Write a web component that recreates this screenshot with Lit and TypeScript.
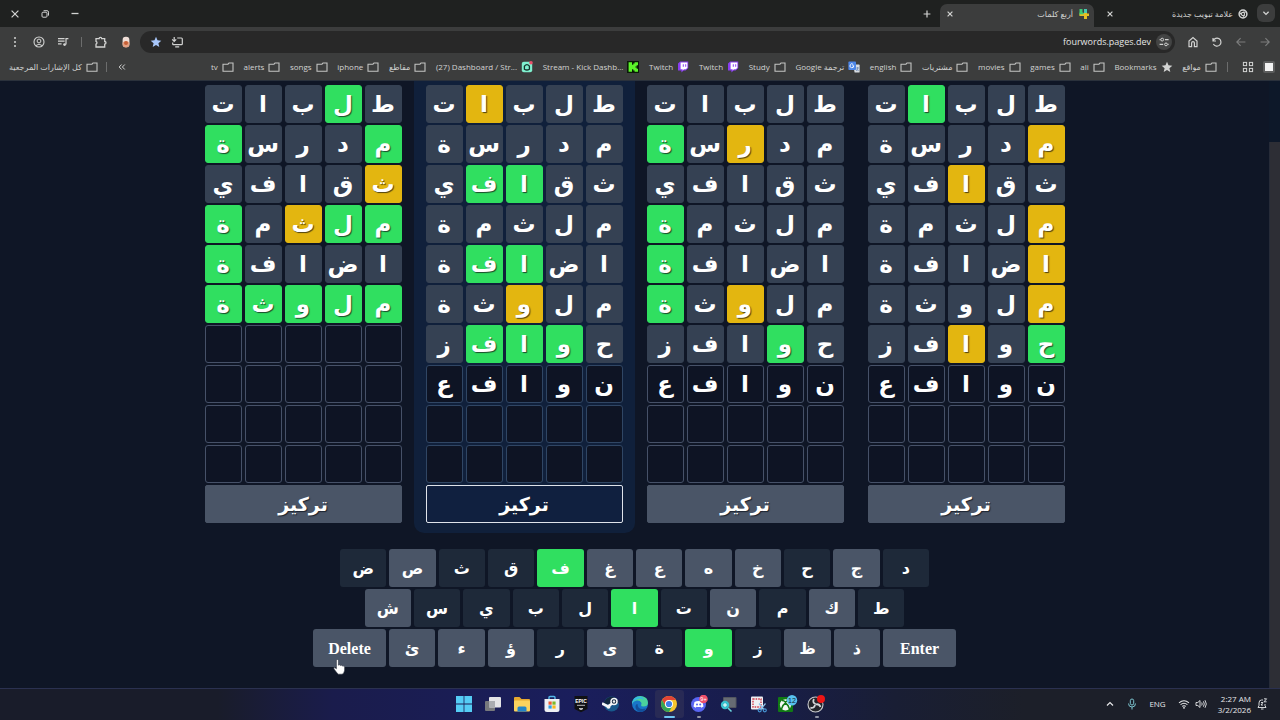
import { LitElement, html, svg, css, nothing, TemplateResult } from "lit";
import { customElement, property } from "lit/decorators.js";
import { classMap } from "lit/directives/class-map.js";

const icon = (size: number, box: string, body: TemplateResult) =>
  html`<svg width=${size} height=${size} viewBox=${box} aria-hidden="true" fill="none" stroke="currentColor">${body}</svg>`;

const folder = html`<svg width="12" height="12" viewBox="0 0 12 12" aria-hidden="true" fill="none" stroke="#c4c5c4" stroke-width="1.1">
  <path d="M1 3.2H6l1-1.2h4v8.2H1z" /></svg>`;

const glyphs = {
  close: icon(10, "0 0 10 10", svg`<path d="M1.6 1.6l6.8 6.8M8.4 1.6L1.6 8.4" stroke-width="1.2"/>`),
  tabClose: icon(8, "0 0 8 8", svg`<path d="M1.6 1.6l4.8 4.8M6.4 1.6L1.6 6.4" stroke-width="1.2"/>`),
  restore: icon(10, "0 0 10 10", svg`<rect x="2" y="3.2" width="5" height="5" rx="1"/><path d="M3.6 1.7H7q1.5 0 1.5 1.5v3.4"/>`),
  minimize: icon(10, "0 0 10 10", svg`<path d="M1.5 4.5h7" stroke-width="1.3"/>`),
  plus: icon(10, "0 0 10 10", svg`<path d="M5 1.6v6.8M1.6 5h6.8" stroke-width="1.2"/>`),
  chevron: icon(10, "0 0 10 10", svg`<path d="M2.4 3.8L5 6.4l2.6-2.6" stroke-width="1.3"/>`),
  chromeMono: icon(10, "0 0 10 10", svg`<circle cx="5" cy="5" r="3.9" stroke-width="1.5"/><circle cx="5" cy="5" r="1.6" stroke-width="1.1"/><path d="M5 3.1h3.6M3.4 6L1.6 3M6.6 6L4.9 9" stroke-width="1"/>`),
  four: icon(12, "0 0 12 12", svg`<g stroke="none"><path d="M1.500 1h3v4h2.500v2.500H1.500z" fill="#3ecb74"/><path d="M1.500 5.500H11V8H1.500z" fill="#e5be24"/><path d="M1.500 4.500h4v1.800h-4z" fill="#3ecb74"/><path d="M6 1h3v4.500H6z" fill="#46c7b0"/><path d="M6 5h3v6H6z" fill="#e5be24"/></g>`),
  dots: icon(12, "0 0 12 12", svg`<g fill="currentColor" stroke="none"><circle cx="6" cy="2" r="1"/><circle cx="6" cy="6" r="1"/><circle cx="6" cy="10" r="1"/></g>`),
  person: icon(12, "0 0 12 12", svg`<circle cx="6" cy="6" r="5" stroke-width="1.1"/><circle cx="6" cy="5" r="1.9"/><path d="M2.8 9.6q3.2-2.8 6.4 0"/>`),
  media: icon(12, "0 0 12 12", svg`<path d="M1 2.6h6.6M1 5.2h6.6M1 7.8h3.6M9 8.4V2.6h2.4" stroke-width="1.2"/><circle cx="7.6" cy="8.6" r="1.4" fill="currentColor" stroke="none"/>`),
  puzzle: icon(14, "0 0 14 14", svg`<path d="M2 3.6h3.1a1.3 1.3 0 0 1 2.6 0h3v2.9a1.3 1.3 0 0 1 0 2.6v2.9H2V9.2a1.5 1.5 0 0 0 0-2.8z" stroke-width="1.3"/>`),
  extension: icon(12, "0 0 12 12", svg`<g stroke="none"><rect x="2.6" y=".8" width="6.8" height="10.4" rx="3.2" fill="#f0dfd8"/><path d="M2.6 6.4q3.4-2.4 6.8 0v1.8a3.2 3 0 0 1-6.8 0z" fill="#e3a184"/><circle cx="6" cy="7" r="2" fill="#c65f36"/></g>`),
  star: icon(12, "0 0 12 12", svg`<path d="M6 .8l1.5 3.5 3.8.4-2.9 2.5.9 3.8L6 9 2.7 11l.9-3.8L.7 4.7l3.8-.4z" fill="currentColor" stroke="none"/>`),
  install: icon(12, "0 0 12 12", svg`<path d="M6.2 2h4.2q.9 0 .9.9v4.9q0 .9-.9.9H2.6q-.9 0-.9-.9V6.600M4.200 10.800h4M3.200 1v4M1.200 3.400l2 2 2-2" stroke-width="1.2"/>`),
  tune: icon(12, "0 0 12 12", svg`<path d="M1.6 3.6h1M7 3.6h3.6M1.6 8.4h3.6M9.8 8.4h.8" stroke-width="1.2"/><circle cx="4.2" cy="3.6" r="1.4"/><circle cx="8" cy="8.4" r="1.4"/>`),
  home: icon(12, "0 0 12 12", svg`<path d="M2 5l4-3.4L10 5v5.6H7.4V7a1.4 1.4 0 0 0-2.8 0v3.6H2z" stroke-width="1.2"/>`),
  reload: icon(12, "0 0 12 12", svg`<path d="M2 2v3h3M2.2 4.8A4 4 0 1 1 2.4 8" stroke-width="1.2"/>`),
  left: icon(12, "0 0 12 12", svg`<path d="M10.4 6H2M5.6 2.2L1.8 6l3.8 3.8" stroke-width="1.1"/>`),
  right: icon(12, "0 0 12 12", svg`<path d="M1.6 6H10M6.4 2.2L10.2 6 6.4 9.8" stroke-width="1.1"/>`),
  more: icon(10, "0 0 10 10", svg`<path d="M4.6 2.500L2.200 5l2.400 2.500M7.800 2.500L5.400 5l2.400 2.500" stroke-width="1"/>`),
  dash: icon(12, "0 0 12 12", svg`<rect x=".8" y=".8" width="10.4" height="10.4" rx="2" fill="#7ff0cf" stroke="none"/><path d="M3.4 5.2q2.6-3 5 0v3q-2.4 1.6-5 0z" stroke="#15332c" stroke-width="1.3"/><circle cx="10" cy="1.8" r="1.8" fill="#e8506a" stroke="none"/>`),
  kick: icon(12, "0 0 12 12", svg`<g stroke="none"><rect width="12" height="12" fill="#0b1a08"/><path d="M1.6 1.2H5v2.6h1.3V2.5h1.3V1.2H11v3H9.700v1.300H8.400v1h1.300v1.300H11v3H7.600V9.500H6.300V8.200H5v2.600H1.600z" fill="#5cf52a"/></g>`),
  twitch: icon(12, "0 0 12 12", svg`<g stroke="none"><path d="M1 2.600L3.200.6h8v6.600L8.600 9.600H6.600L4.400 11.600V9.600H1z" fill="#8a3df0"/><path d="M3.600 1.400h6.800v5.400L8.800 8.200H7L5.600 9.600V8.200h-2z" fill="#fff"/><path d="M5.800 3.200h1v2.600h-1zM8.200 3.200h1v2.600h-1z" fill="#8a3df0"/></g>`),
  translate: icon(12, "0 0 12 12", svg`<g stroke="none"><path d="M5 3.600h6q.6 0 .6.600v6.800q0 .6-.6.600H6.600z" fill="#d7dce2"/><rect x=".4" y=".6" width="7.600" height="8.400" rx=".8" fill="#4c86e8"/></g><path d="M5.800 4.800H4.400M5.800 4.800A1.900 1.900 0 1 1 5.200 3.400" stroke="#fff" stroke-width=".9"/><path d="M8.200 7h2.800M9.600 6v1q0 2-1.400 3M8.800 8.200l1.800 1.800" stroke="#5e7fb0" stroke-width=".7"/>`),
  apps: icon(12, "0 0 12 12", svg`<rect x="1.400" y="1.400" width="3.200" height="3.200"/><rect x="7.400" y="1.400" width="3.200" height="3.200"/><rect x="1.400" y="7.400" width="3.200" height="3.200"/><rect x="7.400" y="7.400" width="3.200" height="3.200"/>`),
  panel: icon(12, "0 0 12 12", svg`<rect width="12" height="12" rx="2" fill="#5c5d5d" stroke="none"/><rect x="2" y="2" width="8" height="8" fill="#f2f2f2" stroke="none"/>`),
};

const bookmarks: { label: string; mark: TemplateResult; ar?: boolean }[] = [
  { label: "tv", mark: folder },
  { label: "alerts", mark: folder },
  { label: "songs", mark: folder },
  { label: "iphone", mark: folder },
  { label: "مقاطع", mark: folder, ar: true },
  { label: "(27) Dashboard / Str...", mark: glyphs.dash },
  { label: "Stream - Kick Dashb...", mark: glyphs.kick },
  { label: "Twitch", mark: glyphs.twitch },
  { label: "Twitch", mark: glyphs.twitch },
  { label: "Study", mark: folder },
  { label: "ترجمة Google", mark: glyphs.translate, ar: true },
  { label: "english", mark: folder },
  { label: "مشتريات", mark: folder, ar: true },
  { label: "movies", mark: folder },
  { label: "games", mark: folder },
  { label: "ali", mark: folder },
  { label: "Bookmarks", mark: glyphs.star },
  { label: "مواقع", mark: folder, ar: true },
];

@customElement("browser-chrome")
export class BrowserChrome extends LitElement {
  static styles = css`
    :host { display: block; color: #d2d3d2; font-family: "Open Sans", "DejaVu Sans", sans-serif; font-size: 8px; line-height: 12px; }
    svg { display: block; flex: none; }
    button { display: grid; place-items: center; padding: 0; border: 0; background: none; color: inherit; font: inherit; }
    .strip { display: flex; align-items: stretch; height: 27px; padding-right: 5px; background: #1f2120; }
    .window { display: flex; align-items: center; gap: 20px; padding-left: 10px; }
    .fill { flex: 1; }
    .new { width: 26px; }
    .tab { display: flex; align-items: center; gap: 5px; width: 159px; padding: 0 5px 0 12px; margin-top: 4px; box-sizing: border-box; }
    .tab.on { width: 154px; padding: 0 4px 0 6px; background: #3c3d3d; border-radius: 7px 7px 0 0; }
    .tab svg { margin-bottom: 3px; }
    .title { flex: 1; direction: rtl; text-align: start; margin-bottom: 3px; }
    .list { width: 18px; height: 18px; margin: 4px 0 0 4px; border-radius: 6px; background: #3c3d3d; }
    .bar { display: flex; align-items: center; height: 27px; padding: 3px 9px 0 9px; box-sizing: border-box; background: #3c3d3d; }
    .tools { display: flex; align-items: center; gap: 12px; padding-right: 8px; }
    .rule { width: 1px; height: 10px; background: #6c6d6d; }
    .box { flex: 1; display: flex; align-items: center; height: 22px; padding: 0 3px 0 10px; gap: 9px; border-radius: 11px; background: #282828; }
    .box input { flex: 1; min-width: 0; padding: 0; border: 0; outline: 0; background: none; color: #e6e6e6; text-align: right; font: 9px/12px "Open Sans", sans-serif; }
    .saved { color: #a8c7fa; }
    .chip { width: 16px; height: 16px; border-radius: 8px; background: #434444; margin-left: -4px; }
    .nav { display: flex; gap: 12px; padding-left: 12px; }
    .dim { color: #7c7d7d; }
    .marks { display: flex; align-items: center; height: 27px; padding: 0 5px 1px 9px; box-sizing: border-box; background: #3c3d3d; border-bottom: 1px solid #2a313c; }
    .mark { display: flex; align-items: center; gap: 4px; color: inherit; text-decoration: none; white-space: nowrap; }
    .ar { direction: rtl; }
    .all { width: 87px; justify-content: space-between; }
    .marks .rule { margin: 0 10px; }
    .row { flex: 1; display: flex; justify-content: space-between; padding-left: 84px; }
    .tail { display: flex; gap: 9px; margin-left: 4px; }
  `;

  render() {
    return html`
      <div class="strip">
        <div class="window">
          <button aria-label="إغلاق">${glyphs.close}</button>
          <button aria-label="استعادة">${glyphs.restore}</button>
          <button aria-label="تصغير">${glyphs.minimize}</button>
        </div>
        <div class="fill"></div>
        <button class="new" aria-label="علامة تبويب جديدة">${glyphs.plus}</button>
        <div class="tab on">
          <button aria-label="إغلاق علامة التبويب">${glyphs.tabClose}</button>
          <span class="title">أربع كلمات</span>${glyphs.four}
        </div>
        <div class="tab">
          <button aria-label="إغلاق علامة التبويب">${glyphs.tabClose}</button>
          <span class="title">علامة تبويب جديدة</span>${glyphs.chromeMono}
        </div>
        <button class="list" aria-label="علامات التبويب">${glyphs.chevron}</button>
      </div>
      <div class="bar">
        <div class="tools">
          <button aria-label="القائمة">${glyphs.dots}</button>
          <button aria-label="الملف الشخصي">${glyphs.person}</button>
          <button aria-label="الوسائط">${glyphs.media}</button>
          <span class="rule"></span>
          <button aria-label="الإضافات">${glyphs.puzzle}</button>
          <button aria-label="إضافة">${glyphs.extension}</button>
        </div>
        <div class="box">
          <button class="saved" aria-label="إشارة مرجعية">${glyphs.star}</button>
          <button aria-label="تثبيت">${glyphs.install}</button>
          <input aria-label="العنوان" value="fourwords.pages.dev" />
          <button class="chip" aria-label="معلومات الموقع">${glyphs.tune}</button>
        </div>
        <div class="nav">
          <button aria-label="الصفحة الرئيسية">${glyphs.home}</button>
          <button aria-label="إعادة تحميل">${glyphs.reload}</button>
          <button class="dim" aria-label="الأمام">${glyphs.left}</button>
          <button class="dim" aria-label="الخلف">${glyphs.right}</button>
        </div>
      </div>
      <div class="marks">
        <a class="mark all" href="#"><span class="ar">كل الإشارات المرجعية</span>${folder}</a>
        <span class="rule"></span>
        <button aria-label="المزيد">${glyphs.more}</button>
        <div class="row">
          ${bookmarks.map((b) => html`<a class="mark" href="#"><span class=${b.ar ? "ar" : "en"}>${b.label}</span>${b.mark}</a>`)}
        </div>
        <span class="rule"></span>
        <div class="tail">
          <button aria-label="التطبيقات">${glyphs.apps}</button>
          <button aria-label="اللوحة">${glyphs.panel}</button>
        </div>
      </div>`;
  }
}

type Board = { active?: boolean; marks: string[]; typing: boolean };
const guesses = ["طلبات", "مدرسة", "ثقافي", "ملثمة", "اضافة", "ملوثة", "حوافز"];
const current = "نوافع";
const ROWS = 10;

/* g: right place, y: wrong place, -: absent */
const boards: Board[] = [
  { typing: false, marks: ["-g---", "g---g", "y----", "ggy-g", "----g", "ggggg"] },
  { typing: true, active: true, marks: ["---y-", "-----", "--gg-", "-----", "--gg-", "--y--", "-ggg-"] },
  { typing: true, marks: ["-----", "--y-g", "-----", "----g", "----g", "--y-g", "-g---"] },
  { typing: true, marks: ["---g-", "y----", "--y--", "y----", "y----", "y----", "g-y--"] },
];

@customElement("word-board")
export class WordBoard extends LitElement {
  @property({ attribute: false }) board!: Board;

  static styles = css`
    :host { display: block; font-family: "DejaVu Sans", sans-serif; }
    .board { display: flex; flex-direction: column; gap: 2px; padding: 4px 12px 10px; border-radius: 0 0 10px 10px; direction: rtl; }
    .board.active { background: #10203b; }
    .line { display: grid; grid-template-columns: repeat(5, 37px); gap: 3px; }
    .tile { height: 38px; box-sizing: border-box; border-radius: 3px; color: #fff; font-weight: 700; font-size: 23px; line-height: 36px; text-align: center; background: #0e1424; border: 1px solid #465168; }
    .active .tile { border-color: #304664; }
    .tile.absent, .active .tile.absent { background: #354153; border-color: #354153; }
    .tile.g, .active .tile.g { background: #30df60; border-color: #30df60; text-shadow: 1px 1px 1px #1b4a2c; }
    .tile.y, .active .tile.y { background: #e3b610; border-color: #e3b610; text-shadow: 1px 1px 1px #4f4210; }
    .focus { height: 38px; padding: 0; border: 1px solid #4a5567; border-radius: 2px; background: #4a5567; color: #fff; font: 700 19px/32px "DejaVu Sans", sans-serif; text-shadow: 1px 1px 1px #1c2430; }
    .active .focus { background: #10203f; border-color: #dfe3ea; }
  `;

  private tile(letter: string, mark: string) {
    return html`<span class=${classMap({ tile: true, g: mark === "g", y: mark === "y", absent: mark === "-" })}>${letter || nothing}</span>`;
  }

  render() {
    const { marks, typing, active } = this.board;
    const lines = Array.from({ length: ROWS }, (_, r) => {
      const word = r < marks.length ? guesses[r] : typing && r === marks.length ? current : "";
      return html`<div class="line">${[0, 1, 2, 3, 4].map((c) => this.tile(word[c] ?? "", marks[r]?.[c] ?? ""))}</div>`;
    });
    return html`<section class=${classMap({ board: true, active: !!active })}>
      ${lines}<button class="focus">تركيز</button>
    </section>`;
  }
}

/* g: found, d: ruled out, u: unused */
const keyRows: [string, string, string][] = [
  ["top", "ضصثقفغعهخحجد", "duddguuuudud"],
  ["middle", "شسيبلاتنمكط", "uddddgdudud"],
  ["bottom", "ئءؤرىةوزظذ", "uuududgduu"],
];

@customElement("letter-keyboard")
export class LetterKeyboard extends LitElement {
  static styles = css`
    :host { display: flex; flex-direction: column; align-items: center; gap: 2px; }
    .keys { display: flex; gap: 3px; max-width: 100%; }
    .top { width: 589px; }
    .middle { width: 540px; }
    .bottom { width: 643px; }
    .key { flex: 1 1 0; min-width: 0; height: 38px; padding: 1px 0 0; border: 0; border-radius: 3px; color: #fff; font: 700 16px/24px "DejaVu Sans", sans-serif; }
    .u { background: #4a5567; }
    .d { background: #1e2939; }
    .g { background: #30df60; }
    .wide { position: relative; flex: 0 0 73px; font-family: "Liberation Serif", serif; }
    .hand { position: absolute; left: 20px; top: 30px; }
  `;

  render() {
    return html`${keyRows.map(([name, letters, states]) => html`<div class="keys ${name}">
      ${name === "bottom"
        ? html`<button class="key wide u">Delete
            <svg class="hand" width="13" height="16" viewBox="0 0 13 16" aria-hidden="true">
              <path d="M3.400 1.600q0-1.200 1-1.200t1 1.200v4.600q1.300-.9 2 .3 1.300-.8 2 .4 2-.6 2.200 1.300v3q-.2 2.800-2.400 4H5.200Q3.600 13.600 1 10q-.8-1.600.8-1.400l1.600 1.200z" fill="#fff" stroke="#2b3340" stroke-width=".6"/>
            </svg></button>`
        : nothing}
      ${[...letters].map((l, i) => html`<button class="key ${states[i]}">${l}</button>`)}
      ${name === "bottom" ? html`<button class="key wide u">Enter</button>` : nothing}
    </div>`)}`;
  }
}

const app = (body: TemplateResult) =>
  html`<svg width="18" height="18" viewBox="0 0 18 18" aria-hidden="true" fill="none">${body}</svg>`;

const apps: { name: string; art: TemplateResult; state?: "on" | "open" }[] = [
  { name: "Start", art: app(svg`<path d="M1 1h7.600v7.600H1zM9.400 1H17v7.600H9.400zM1 9.400h7.600V17H1zM9.400 9.400H17V17H9.400z" fill="#55cdf5"/>`) },
  { name: "Task view", art: app(svg`<rect x="1" y="6" width="10" height="10" rx="1" fill="#77797d"/><rect x="5" y="2" width="12" height="10.500" rx="1" fill="#e4e4e6"/><path d="M5 6h6v6.500H5z" fill="#aaacb0"/>`) },
  { name: "Files", art: app(svg`<path d="M1 3q0-1 1-1h4.500l2 2H16q1 0 1 1v3H1z" fill="#e6a92f"/><rect x="1" y="5.500" width="16" height="11" rx="1" fill="#fbd35e"/><path d="M4.500 16.500V13q0-1.500 1.500-1.500h6q1.500 0 1.500 1.500v3.500z" fill="#2485c8"/>`) },
  { name: "Store", art: app(svg`<path d="M6 4V2.500Q6 1.500 7 1.500h4q1 0 1 1V4" stroke="#54b9ea" stroke-width="1.400"/><path d="M1.500 4h15v10.500q0 2.500-2.500 2.500H4q-2.500 0-2.500-2.500z" fill="#eef0f3"/><path d="M5.500 6.500h3.200v3.200H5.500z" fill="#ef5a32"/><path d="M9.400 6.500h3.200v3.200H9.400z" fill="#7db928"/><path d="M5.500 10.400h3.200v3.200H5.500z" fill="#2b9fe3"/><path d="M9.400 10.400h3.200v3.200H9.400z" fill="#f9b91e"/>`) },
  { name: "Epic Games", art: app(svg`<path d="M2.500 1h13v13L9 17.200 2.500 14z" fill="#101114"/><text x="9" y="8" text-anchor="middle" font-family="Liberation Sans" font-weight="700" font-size="5" fill="#fff">EPIC</text><path d="M5 10.300h8M7 13.500h4L9 14.800z" stroke="#c9cacc" stroke-width=".9"/>`) },
  { name: "Steam", art: app(svg`<circle cx="9.500" cy="9" r="7.600" fill="#17588c"/><path d="M1.900 8.500A7.600 7.600 0 0 1 17 8.500q-4-2-8 2z" fill="#12283f"/><path d="M0 8.500l6 3 5.500-4" stroke="#f4f6f8" stroke-width="2.600"/><circle cx="12" cy="6.500" r="3" fill="#12283f" stroke="#f4f6f8" stroke-width="1.500"/><circle cx="12" cy="6.500" r="1.200" fill="#f4f6f8"/><circle cx="6.500" cy="11.800" r="2" fill="#f4f6f8"/>`) },
  { name: "Edge", art: app(svg`<circle cx="9" cy="9" r="8" fill="#1976c9"/><path d="M1 9Q2 1 9.500 1 17 1.500 17 8q-.4 3.500-4.500 3.500-2.500 0-2.500-1.500 1-1 .2-2.500Q8.700 5 5.500 5.600 2 6.400 1 9z" fill="#4bd19d"/><path d="M1 9Q1.500 3.500 6 2q6-1.500 7 3Q9 2.500 5.500 4.500 2 6 1 9z" fill="#35b8e6"/><path d="M6.500 9q0 6.500 8.500 4.500Q12.500 17 9 17 4 15.500 4.500 11q.4-2 2-2z" fill="#124f9c"/>`) },
  { name: "Chrome", state: "on", art: app(svg`<circle cx="9" cy="9" r="8" fill="#f7c52d"/><path d="M2.100 5A8 8 0 0 1 15.900 5H9a4 4 0 0 0-3.500 6z" fill="#e24335"/><path d="M2.100 5A8 8 0 0 0 9 17l3.500-6a4 4 0 0 1-7 0z" fill="#33a557"/><circle cx="9" cy="9" r="4" fill="#fff"/><circle cx="9" cy="9" r="3.100" fill="#3f7fe8"/>`) },
  { name: "Discord", state: "open", art: app(svg`<circle cx="8.500" cy="9.500" r="7.500" fill="#5865f2"/><path d="M4.500 7Q8.500 5 12.500 7l1 4.500-2.200 1.200-.8-1q-2 .6-4 0l-.8 1-2.200-1.200z" fill="#fff"/><circle cx="7" cy="9.500" r="1" fill="#5865f2"/><circle cx="10.200" cy="9.500" r="1" fill="#5865f2"/><circle cx="13.500" cy="4" r="4.300" fill="#f0506b"/><text x="13.500" y="6" text-anchor="middle" font-family="Liberation Sans" font-size="5.500" fill="#fff">9+</text>`) },
  { name: "Magnifier", art: app(svg`<rect x="4" y="2" width="13.500" height="11" rx="1" fill="#52565f"/><rect x="5" y="3" width="11.500" height="9" fill="#666b73"/><circle cx="6" cy="10" r="4.200" fill="#38c0cf"/><path d="M9 13l3.500 3.500" stroke="#6cd3dc" stroke-width="1.600"/><path d="M6 8v4M4 10h4" stroke="#fff"/>`) },
  { name: "Snipping Tool", art: app(svg`<rect x="2" y="1.500" width="12" height="13" rx="1" fill="#eef0f4"/><rect x="4" y="4" width="8" height="8" stroke="#d23d4c" stroke-width="1.400" stroke-dasharray="1.600 1"/><path d="M10 8.500l5 6M16.500 8.500l-5 6" stroke="#8fc2e8" stroke-width="1.200"/><circle cx="10.700" cy="15.300" r="1.500" stroke="#4795d4" stroke-width="1.200"/><circle cx="15.800" cy="15.300" r="1.500" stroke="#4795d4" stroke-width="1.200"/>`) },
  { name: "Xbox", art: html`<svg width="22" height="18" viewBox="-1 0 22 18" aria-hidden="true" fill="none"><rect x="1" y="2" width="15" height="15" rx="1" fill="#117a14"/><circle cx="8.500" cy="9.800" r="5.600" fill="#f3f8f3"/><path d="M4.500 14Q6 9.500 8.500 8q2.500 1.500 4 6M5 5.500Q7 5.500 8.500 7q1.500-1.500 3.500-1.500" stroke="#117a14" stroke-width="1.500"/><circle cx="15" cy="5.200" r="5.200" fill="#58c2ef"/><text x="15" y="7.700" text-anchor="middle" font-family="Liberation Sans" font-size="7" fill="#10222d">12</text></svg>` },
  { name: "OBS", state: "open", art: app(svg`<circle cx="8.500" cy="9.500" r="7.500" fill="#23242a" stroke="#c9cacd" stroke-width="1.100"/><path d="M8.500 9Q5 7.500 7 4M8.500 9.500q3.800-1 5 2.500M8 10q-1 3.800-4.600 2.600" stroke="#d4d5d8" stroke-width="1.800"/><circle cx="14" cy="4" r="4" fill="#ee1515"/>`) },
];

@customElement("task-bar")
export class TaskBar extends LitElement {
  static styles = css`
    :host { display: grid; grid-template-columns: 1fr 382px 1fr; height: 32px; padding-bottom: 2px; box-sizing: border-box; border-top: 1px solid #2b3150;
      background: linear-gradient(90deg, #191c2a 0, #191c2a 17%, #1a1c4c 26%, #1a1e5c 45%, #181d4c 58%, #191e34 70%, #1c1f29 80%); color: #e7e8ea; font: 8px/11px "Open Sans", sans-serif; }
    svg { display: block; }
    button { padding: 0; border: 0; background: none; color: inherit; font: inherit; }
    .apps { grid-column: 2; display: flex; align-items: center; }
    .app { position: relative; flex: 1 1 0; height: 28px; display: grid; place-items: center; border-radius: 3px; }
    .app.on { background: #282a55; }
    .dash { position: absolute; bottom: 0; left: 13px; width: 4px; height: 2px; border-radius: 1px; background: #9296a6; }
    .on .dash { left: 9px; width: 11px; background: #6fc6f3; }
    .tray { display: flex; justify-content: flex-end; align-items: center; gap: 5px; padding-right: 12px; }
    .tray > * { display: block; }
    .lang { margin: 0 7px 0 6px; }
    .caret { margin-right: 6px; }
    .clock { text-align: right; margin-left: 6px; }
    .clock span { display: block; }
  `;

  render() {
    return html`
      <div class="apps">
        ${apps.map((a) => html`<button class="app ${a.state ?? ""}" aria-label=${a.name}>${a.art}${a.state ? html`<span class="dash"></span>` : nothing}</button>`)}
      </div>
      <div class="tray">
        <button class="caret" aria-label="Hidden icons">${icon(10, "0 0 10 10", svg`<path d="M2 6.500l3-3 3 3" stroke-width="1.200"/>`)}</button>
        <svg width="12" height="12" viewBox="0 0 12 12" aria-hidden="true" fill="none" stroke="#7cc4cf"><rect x="4.300" y="1" width="3.400" height="6" rx="1.700"/><path d="M2.500 5.500q0 3.500 3.500 3.500t3.500-3.500M6 9v2.500"/></svg>
        <span class="lang">ENG</span>
        ${icon(12, "0 0 12 12", svg`<path d="M1 4.800q5-4.200 10 0M2.600 6.600q3.400-2.800 6.800 0M4.200 8.400q1.800-1.400 3.600 0" stroke-width="1.100"/><circle cx="6" cy="9.800" r=".9" fill="currentColor" stroke="none"/>`)}
        ${icon(12, "0 0 12 12", svg`<path d="M1 4.500h1.800L5 2.500v7L2.800 7.500H1zM6.700 4.500q1 1.500 0 3M8.400 3.300q1.800 2.700 0 5.400M10 2.200q2.600 3.800 0 7.600" stroke-width=".9"/>`)}
        <button class="clock"><span>2:27 AM</span><span>3/2/2026</span></button>
        ${icon(12, "0 0 12 12", svg`<path d="M7 2H5.500Q3 2 3 5v2.500L2 9.500h8L9 7.500V6M5 11h2.500M8 .8h2.600L8 3.800h2.600M5 4.500h2L5 7h2" stroke-width=".9"/>`)}
      </div>`;
  }
}

@customElement("app-root")
export class AppRoot extends LitElement {
  static styles = css`
    :host { display: flex; flex-direction: column; height: 100vh; overflow: hidden; background: #0f1626; }
    .view { flex: 1; min-height: 0; display: flex; overflow: hidden; }
    .game { flex: 1; display: flex; flex-direction: column; align-items: center; gap: 16px; }
    .boards { display: flex; }
    .scroll { width: 11px; background: #0d1829; padding-top: 61px; display: flex; box-sizing: border-box; }
    .thumb { flex: 1; background: #2d2e35; border-left: 1px solid #262b38; }
  `;

  render() {
    return html`
      <browser-chrome></browser-chrome>
      <div class="view">
        <main class="game">
          <div class="boards">${boards.map((b) => html`<word-board .board=${b}></word-board>`)}</div>
          <letter-keyboard></letter-keyboard>
        </main>
        <div class="scroll"><div class="thumb"></div></div>
      </div>
      <task-bar></task-bar>`;
  }
}
